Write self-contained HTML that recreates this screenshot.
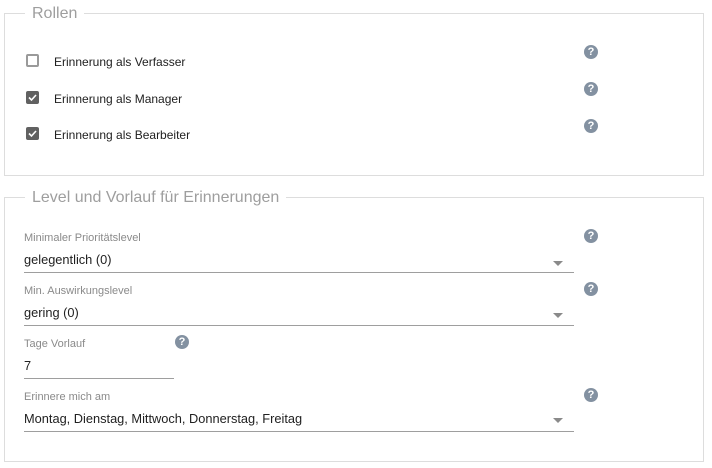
<!DOCTYPE html>
<html><head><meta charset="utf-8"><style>
*{margin:0;padding:0;box-sizing:border-box}
body{width:712px;height:468px;background:#fff;font-family:"Liberation Sans",Arial,sans-serif;position:relative;overflow:hidden;color:#212121}
.a{position:absolute}
.fs{position:absolute;border:1px solid #ddd}
.leg{position:absolute;background:#fff;color:#9e9e9e;font-size:16px;padding:0 7px}
.cb{position:absolute;left:26px;width:13px;height:13px;border-radius:2px}
.cb.off{border:2px solid #9a9a9a}
.cb.on{background:#616161}
.lbl{font-size:12px;color:#212121}
.sm{font-size:11px;color:#8a8a8a}
.val{font-size:12.8px;color:#212121}
.ul{height:1px;background:#9e9e9e}
.q{position:absolute;width:14px;height:14px;border-radius:50%;background:#8391a1;color:#fff;font-size:11px;font-weight:bold;text-align:center;line-height:14px}
.arr{position:absolute;width:0;height:0;border-left:5px solid transparent;border-right:5px solid transparent;border-top:5px solid #8a8a8a}
</style></head><body>
<div class="fs" style="left:4px;top:13px;width:700px;height:163px"></div>
<div class="leg" style="left:25px;top:5px">Rollen</div>
<div class="cb off" style="top:54px"></div>
<div class="a lbl" style="left:54px;top:55px">Erinnerung als Verfasser</div>
<div class="cb on" style="top:91px"><svg width="13" height="13"><path d="M3 6.5l2.5 2.5 4.5-5" stroke="#fff" stroke-width="1.6" fill="none"/></svg></div>
<div class="a lbl" style="left:54px;top:92px">Erinnerung als Manager</div>
<div class="cb on" style="top:127px"><svg width="13" height="13"><path d="M3 6.5l2.5 2.5 4.5-5" stroke="#fff" stroke-width="1.6" fill="none"/></svg></div>
<div class="a lbl" style="left:54px;top:128px">Erinnerung als Bearbeiter</div>
<div class="q" style="left:584px;top:45px">?</div>
<div class="q" style="left:584px;top:82px">?</div>
<div class="q" style="left:584px;top:119px">?</div>

<div class="fs" style="left:4px;top:197px;width:700px;height:265px"></div>
<div class="leg" style="left:25px;top:189px">Level und Vorlauf für Erinnerungen</div>

<div class="a sm" style="left:24px;top:232px">Minimaler Prioritätslevel</div>
<div class="a val" style="left:24px;top:252px">gelegentlich (0)</div>
<div class="arr" style="left:553px;top:261px"></div>
<div class="a ul" style="left:24px;top:272px;width:550px"></div>
<div class="q" style="left:584px;top:229px">?</div>

<div class="a sm" style="left:24px;top:285px">Min. Auswirkungslevel</div>
<div class="a val" style="left:24px;top:305px">gering (0)</div>
<div class="arr" style="left:553px;top:313px"></div>
<div class="a ul" style="left:24px;top:325px;width:550px"></div>
<div class="q" style="left:584px;top:282px">?</div>

<div class="a sm" style="left:24px;top:338px">Tage Vorlauf</div>
<div class="a val" style="left:24px;top:358px">7</div>
<div class="a ul" style="left:24px;top:378px;width:150px"></div>
<div class="q" style="left:175px;top:335px">?</div>

<div class="a sm" style="left:24px;top:391px">Erinnere mich am</div>
<div class="a val" style="left:24px;top:411px">Montag, Dienstag, Mittwoch, Donnerstag, Freitag</div>
<div class="arr" style="left:553px;top:418px"></div>
<div class="a ul" style="left:24px;top:431px;width:550px"></div>
<div class="q" style="left:584px;top:388px">?</div>
</body></html>
